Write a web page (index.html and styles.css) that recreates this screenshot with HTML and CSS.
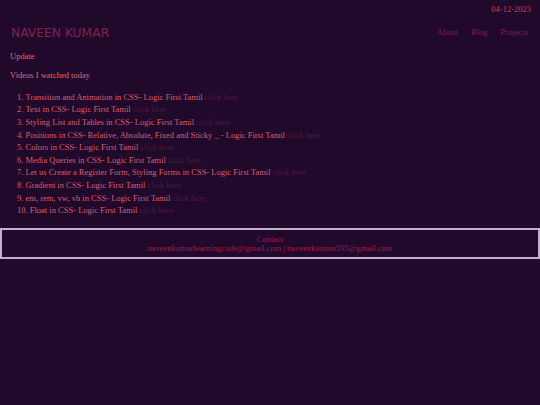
FILE: index.html
```
<!DOCTYPE html>
<html>
<head>
<meta charset="utf-8">
<link rel="stylesheet" href="styles.css">
</head>
<body>
<div class="date">04-12-2023</div>
<header class="header">
  <div class="brand">NAVEEN KUMAR</div>
  <nav class="nav">
    <a href="#">About</a>
    <a href="#">Blog</a>
    <a href="#">Projects</a>
  </nav>
</header>
<main class="main">
  <p class="update">Update</p>
  <p class="intro">Videos I watched today</p>
  <ol class="videos">
    <li>Transition and Animation in CSS- Logic First Tamil <a href="#">click here</a></li>
    <li>Text in CSS- Logic First Tamil <a href="#">click here</a></li>
    <li>Styling List and Tables in CSS- Logic First Tamil <a href="#">click here</a></li>
    <li>Positions in CSS- Relative, Absolute, Fixed and Sticky _ - Logic First Tamil <a href="#">click here</a></li>
    <li>Colors in CSS- Logic First Tamil <a href="#">click here</a></li>
    <li>Media Queries in CSS- Logic First Tamil <a href="#">click here</a></li>
    <li>Let us Create a Register Form, Styling Forms in CSS- Logic First Tamil <a href="#">click here</a></li>
    <li>Gradient in CSS- Logic First Tamil <a href="#">click here</a></li>
    <li>em, rem, vw, vh in CSS- Logic First Tamil <a href="#">click here</a></li>
    <li>Float in CSS- Logic First Tamil <a href="#">click here</a></li>
  </ol>
</main>
<footer class="footer">
  <div class="contact">Contact</div>
  <div class="emails">naveenkumarlearningcode@gmail.com | naveenkannan595@gmail.com</div>
</footer>
</body>
</html>
```
FILE: styles.css
```
html, body {
  margin: 0;
  padding: 0;
  background: #21092c;
}
body {
  font-family: "Liberation Serif", "Times New Roman", serif;
  font-size: 8.5px;
  line-height: 12.6px;
  color: #d85e6e;
}
a {
  text-decoration: none;
}
.date {
  text-align: right;
  padding: 3px 9px 0 0;
  color: #c8405c;
}
.header {
  display: flex;
  justify-content: space-between;
  align-items: center;
  padding: 9px 12px 0 11px;
}
.brand {
  font-family: "DejaVu Sans", "Liberation Sans", sans-serif;
  font-size: 12.3px;
  line-height: 16px;
  color: #80224c;
}
.nav {
  display: flex;
  gap: 13px;
}
.nav a {
  color: #762350;
}
.main {
  padding: 0 10px;
}
.update {
  margin: 9px 0 0;
  color: #dc6a78;
}
.intro {
  margin: 7px 0 0;
  color: #dc6a78;
}
.videos {
  margin: 9px 0 0;
  padding: 0 0 0 7px;
  list-style-position: inside;
}
.videos a {
  color: #4c1a40;
}
.footer {
  margin-top: 11px;
  border: 2px solid #c4aed2;
  text-align: center;
  padding: 5px 0 4px;
  line-height: 9px;
  color: #9c1c4c;
}
```
